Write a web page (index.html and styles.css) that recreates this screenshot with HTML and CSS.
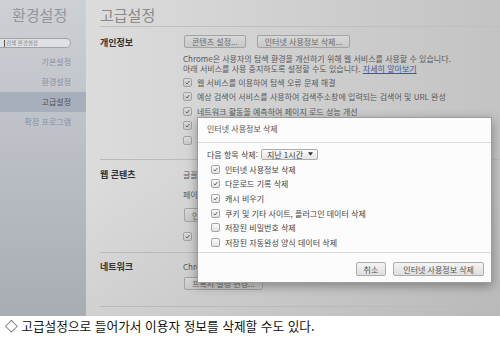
FILE: index.html
```html
<!DOCTYPE html>
<html lang="ko">
<head>
    <meta charset="UTF-8">
    <meta name="viewport" content="width=device-width, initial-scale=1.0">
    <title>고급설정</title>
    <link rel="stylesheet" href="styles.css">
</head>
<body>

    <div class="shot">
        <aside class="sidebar">
            <h1 class="side-title">환경설정</h1>
            <div class="search"><span class="caret"></span>검색 환경설정</div>
            <nav class="nav">
                <a>기본설정</a>
                <a>환경설정</a>
                <a class="active">고급설정</a>
                <a>확장 프로그램</a>
            </nav>
        </aside>

        <main class="main">
            <h2 class="page-title">고급설정</h2>

            <section class="sec sec-privacy">
                <div class="sec-label">개인정보</div>
                <div class="sec-body">
                    <div class="btn-row">
                        <button class="btn">콘텐츠 설정...</button>
                        <button class="btn">인터넷 사용정보 삭제...</button>
                    </div>
                    <p class="desc">Chrome은 사용자의 탐색 환경을 개선하기 위해 웹 서비스를 사용할 수 있습니다.<br>아래 서비스를 사용 중지하도록 설정할 수도 있습니다. <a class="link">자세히 알아보기</a></p>
                    <div class="row"><span class="cb on"><svg viewBox="0 0 10 10"><path d="M2.4 5.2 L4.3 7.1 L7.8 2.8"/></svg></span>웹 서비스를 이용하여 탐색 오류 문제 해결</div>
                    <div class="row"><span class="cb on"><svg viewBox="0 0 10 10"><path d="M2.4 5.2 L4.3 7.1 L7.8 2.8"/></svg></span>예상 검색어 서비스를 사용하여 검색주소창에 입력되는 검색어 및 URL 완성</div>
                    <div class="row"><span class="cb on"><svg viewBox="0 0 10 10"><path d="M2.4 5.2 L4.3 7.1 L7.8 2.8"/></svg></span>네트워크 활동을 예측하여 페이지 로드 성능 개선</div>
                    <div class="row"><span class="cb on"><svg viewBox="0 0 10 10"><path d="M2.4 5.2 L4.3 7.1 L7.8 2.8"/></svg></span>피싱 및 멀웨어 보호 사용</div>
                    <div class="row"><span class="cb"></span>사용 통계 및 비정상 종료 보고서를 Google에 자동으로 전송</div>
                </div>
            </section>

            <section class="sec sec-web">
                <div class="sec-label">웹 콘텐츠</div>
                <div class="sec-body">
                    <div class="line">글꼴 크기:</div>
                    <div class="line">페이지 확대/축소:</div>
                    <div class="btn-row"><button class="btn">언어 및 글꼴 설정...</button></div>
                    <div class="row"><span class="cb on"><svg viewBox="0 0 10 10"><path d="M2.4 5.2 L4.3 7.1 L7.8 2.8"/></svg></span>탭 키를 누르면 웹페이지의 링크가 강조 표시됨</div>
                </div>
            </section>

            <section class="sec sec-net">
                <div class="sec-label">네트워크</div>
                <div class="sec-body">
                    <div class="line">Chrome은 시스템 프록시 설정을 사용하여 네트워크에 연결합니다.</div>
                    <div class="btn-row"><button class="btn">프록시 설정 변경...</button></div>
                </div>
            </section>
        </main>

        <!-- 인터넷 사용정보 삭제 dialog, laid over the settings page -->
        <div class="dialog">
            <div class="dlg-head">인터넷 사용정보 삭제</div>
            <div class="dlg-body">
                <div class="range">다음 항목 삭제: <span class="select">지난 1시간<svg viewBox="0 0 6 4"><path d="M0 0 H6 L3 4 Z"/></svg></span></div>
                <div class="row"><span class="cb on"><svg viewBox="0 0 10 10"><path d="M2.4 5.2 L4.3 7.1 L7.8 2.8"/></svg></span>인터넷 사용정보 삭제</div>
                <div class="row"><span class="cb on"><svg viewBox="0 0 10 10"><path d="M2.4 5.2 L4.3 7.1 L7.8 2.8"/></svg></span>다운로드 기록 삭제</div>
                <div class="row"><span class="cb on"><svg viewBox="0 0 10 10"><path d="M2.4 5.2 L4.3 7.1 L7.8 2.8"/></svg></span>캐시 비우기</div>
                <div class="row"><span class="cb on"><svg viewBox="0 0 10 10"><path d="M2.4 5.2 L4.3 7.1 L7.8 2.8"/></svg></span>쿠키 및 기타 사이트, 플러그인 데이터 삭제</div>
                <div class="row"><span class="cb"></span>저장된 비밀번호 삭제</div>
                <div class="row"><span class="cb"></span>저장된 자동완성 양식 데이터 삭제</div>
            </div>
            <div class="dlg-foot">
                <button class="btn">취소</button>
                <button class="btn">인터넷 사용정보 삭제</button>
            </div>
        </div>
    </div>

    <p class="caption">◇ 고급설정으로 들어가서 이용자 정보를 삭제할 수도 있다.</p>

</body>
</html>
```

FILE: styles.css
```css
body {
    margin: 0;
    background: #fff;
    font-family: "Noto Sans CJK KR", "Noto Sans", sans-serif;
}

.shot {
    position: relative;
    display: flex;
    height: 316px;
    overflow: hidden;
}

/* left column */
.sidebar {
    width: 86px;
    flex: none;
    padding-top: 4px;
    background: linear-gradient(to bottom, #cdd0d5, #a8adb4);
    box-sizing: border-box;
}

.side-title {
    margin: 0;
    padding-left: 12px;
    font-size: 15px;
    line-height: 22px;
    font-weight: normal;
    color: #92969d;
}

.search {
    display: flex;
    align-items: center;
    margin: 12px 15px 0 0;
    height: 10px;
    border: 1px solid #9da1a8;
    border-left: none;
    border-radius: 0 6px 6px 0;
    background: #dfe1e4;
    font-size: 5.5px;
    color: #7d8189;
    box-sizing: border-box;
    padding-left: 4px;
}

.search .caret {
    width: 1px;
    height: 7px;
    background: #555;
    margin-right: 1px;
}

.nav {
    display: flex;
    flex-direction: column;
    margin-top: 4px;
}

.nav a {
    display: block;
    height: 20px;
    line-height: 20px;
    padding-right: 15px;
    text-align: right;
    font-size: 8px;
    color: #8591a5;
}

.nav a.active {
    background: #a7afbd;
    color: #4b5261;
}

/* settings page */
.main {
    flex: 1;
    padding-left: 14px;
    background:
        linear-gradient(to bottom, rgba(0, 0, 0, 0) 55%, rgba(0, 0, 0, 0.05)),
        linear-gradient(to right, #dcdcdc, #c3c3c3);
    color: #5a5a5a;
    font-size: 8px;
}

.page-title {
    margin: 0;
    padding-top: 4px;
    height: 22px;
    line-height: 22px;
    font-size: 15px;
    font-weight: normal;
    color: #8a8a8a;
    border-bottom: 1px solid #bfbfbf;
}

.sec {
    display: grid;
    grid-template-columns: 83px 1fr;
    border-bottom: 1px solid #bababa;
}

.sec-label {
    font-size: 9px;
    font-weight: bold;
    color: #333;
}

.sec-privacy {
    height: 132px;
}

.sec-privacy .sec-label {
    padding-top: 9px;
    line-height: 13px;
}

.sec-privacy .btn-row {
    margin-top: 8px;
}

.btn-row {
    display: flex;
    gap: 10px;
    white-space: nowrap;
}

.btn {
    height: 13px;
    padding: 0 7px;
    font-family: inherit;
    font-size: 8px;
    line-height: 11px;
    color: #555;
    border: 1px solid #acacac;
    border-radius: 2px;
    background: linear-gradient(to bottom, #f4f4f4, #dedede);
    margin: 0 0 0 1px;
}

.main .btn {
    background: linear-gradient(to bottom, #d8d8d8, #c8c8c8);
    border-color: #a3a3a3;
    color: #6a6a6a;
}

.desc {
    margin: 6px 0 2px;
    line-height: 9.6px;
    white-space: nowrap;
}

.link {
    color: #3d5b95;
    text-decoration: underline;
}

.row {
    display: flex;
    align-items: center;
    height: 14.5px;
    white-space: nowrap;
}

.cb {
    display: inline-flex;
    flex: none;
    width: 9px;
    height: 9px;
    margin-right: 5px;
    border: 1px solid #a6a6a6;
    border-radius: 2px;
    background: linear-gradient(to bottom, #fafafa, #e2e2e2);
    box-sizing: border-box;
}

.main .cb {
    background: linear-gradient(to bottom, #dadada, #c9c9c9);
    border-color: #a3a3a3;
}

.cb svg {
    width: 100%;
    height: 100%;
}

.cb svg path {
    fill: none;
    stroke: #555;
    stroke-width: 1.3;
}

.sec-web {
    height: 92px;
}

.sec-web .sec-label,
.sec-net .sec-label {
    padding-top: 10px;
    line-height: 10px;
}

.sec-web .sec-body {
    padding-top: 10px;
}

.line {
    height: 20px;
    line-height: 10px;
    white-space: nowrap;
}

.sec-web .btn-row {
    margin-top: -2px;
}

.sec-web .btn {
    height: 14px;
}

.sec-web .row {
    margin-top: 7px;
}

.sec-net {
    height: 53px;
}

.sec-net .sec-label {
    padding-top: 9px;
}

.sec-net .sec-body {
    padding-top: 9px;
}

.sec-net .line {
    height: 15px;
}

/* dialog */
.dialog {
    position: absolute;
    left: 197px;
    top: 117px;
    width: 295px;
    height: 166px;
    background: #fcfcfc;
    border: 1px solid #9d9d9d;
    box-shadow: 0 3px 10px rgba(0, 0, 0, 0.35);
    box-sizing: border-box;
    display: flex;
    flex-direction: column;
    font-size: 8px;
    color: #444;
}

.dlg-head {
    height: 25px;
    line-height: 22px;
    padding-left: 9px;
    border-bottom: 1px solid #dcdcdc;
    box-sizing: border-box;
    color: #555;
}

.dlg-body {
    flex: 1;
    padding: 4px 0 0 9px;
    border-bottom: 1px solid #dcdcdc;
}

.range {
    display: flex;
    align-items: center;
    height: 14px;
    margin-bottom: 1px;
}

.select {
    display: inline-flex;
    align-items: center;
    gap: 5px;
    height: 11px;
    margin-left: 3px;
    padding: 0 4px 0 5px;
    border: 1px solid #ababab;
    border-radius: 2px;
    background: linear-gradient(to bottom, #fbfbfb, #e4e4e4);
    box-sizing: border-box;
}

.select svg {
    width: 5px;
    height: 4px;
}

.select svg path {
    fill: #333;
}

.dlg-body .row {
    padding-left: 4px;
    height: 14.6px;
}

.dlg-foot {
    height: 29px;
    display: flex;
    justify-content: flex-end;
    align-items: flex-start;
    gap: 7px;
    padding: 9px 7px 0 0;
    box-sizing: border-box;
}

.dlg-foot .btn {
    height: 14px;
    padding: 0 9px;
    margin: 0;
}

.dlg-foot .btn:first-child {
    padding: 0 7px;
}

.caption {
    margin: 0;
    height: 21px;
    line-height: 19px;
    padding-left: 5px;
    font-size: 12.7px;
    color: #111;
}
```
